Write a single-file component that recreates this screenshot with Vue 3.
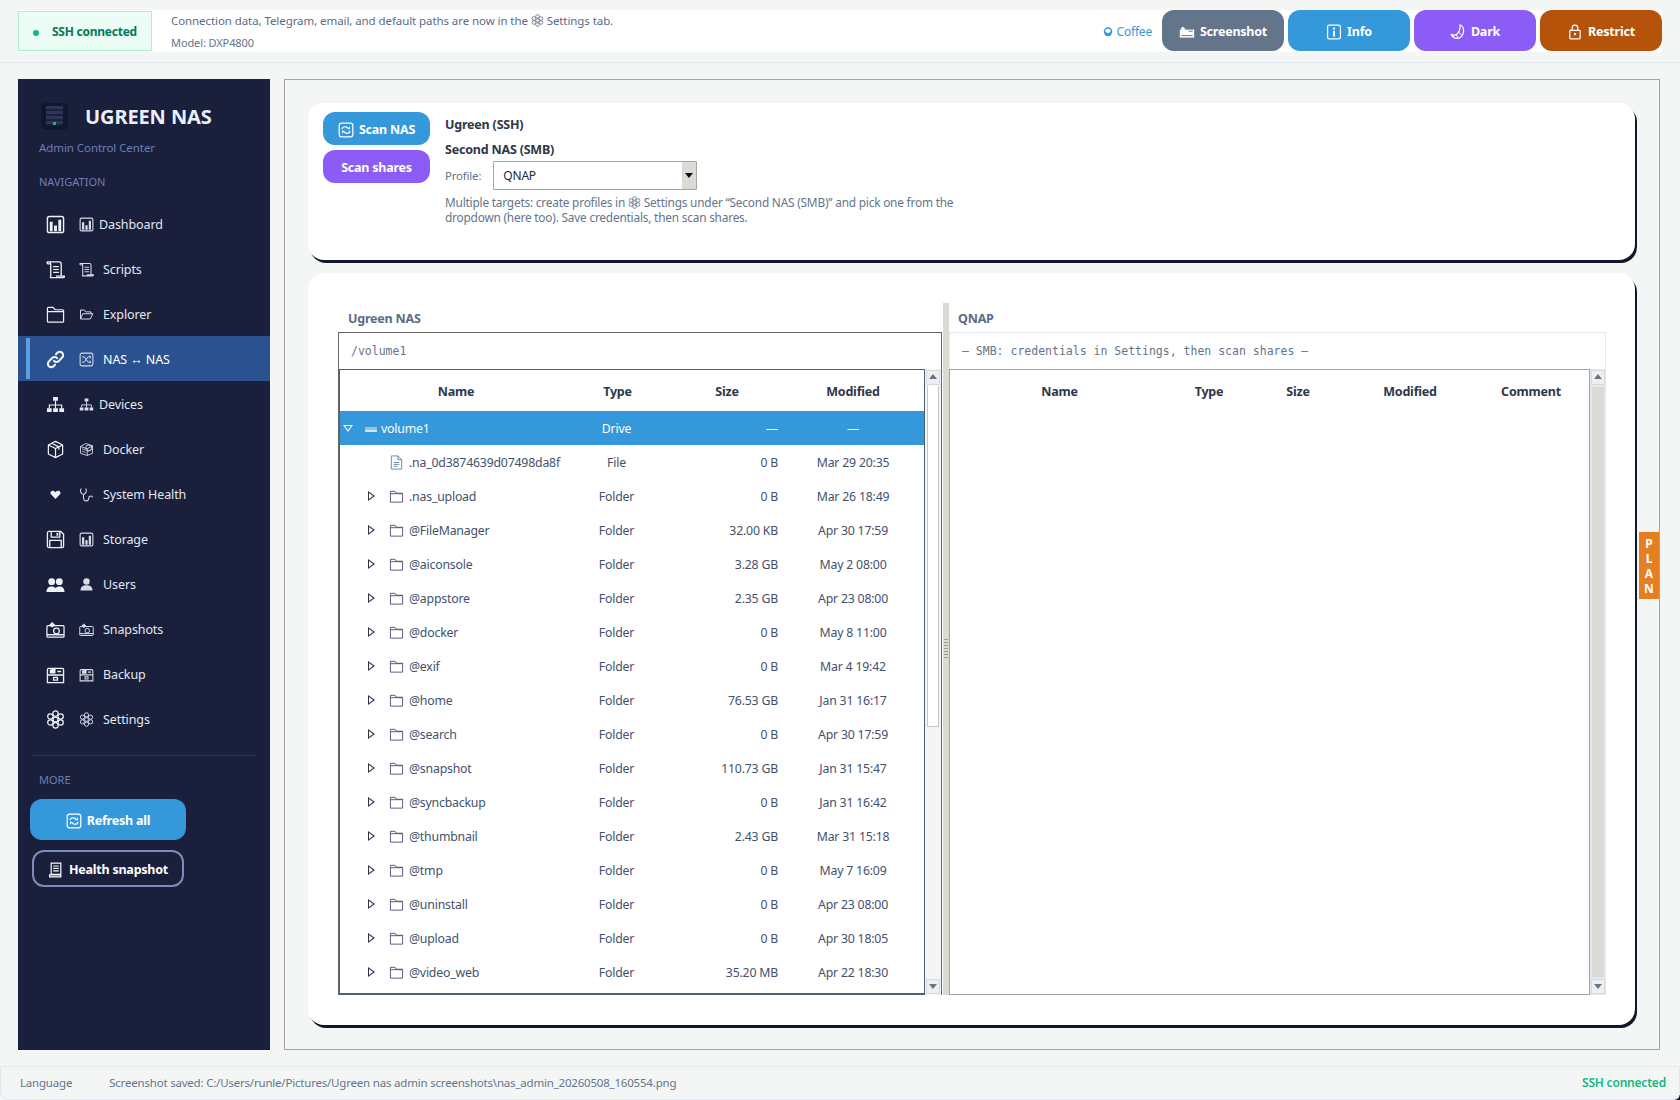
<script setup>
const navItems = [
  { label: 'Dashboard', big: 'chart', small: 'chart', textGap: 5 },
  { label: 'Scripts', big: 'scroll', small: 'scroll', textGap: 9 },
  { label: 'Explorer', big: 'folder', small: 'folderOpen', textGap: 9 },
  { label: 'NAS ↔ NAS', big: 'link', small: 'shuffle', textGap: 9, active: true },
  { label: 'Devices', big: 'network', small: 'network', textGap: 5 },
  { label: 'Docker', big: 'box', small: 'docker', textGap: 9 },
  { label: 'System Health', big: 'heart', small: 'stetho', textGap: 9 },
  { label: 'Storage', big: 'floppy', small: 'chart', textGap: 9 },
  { label: 'Users', big: 'users', small: 'user', textGap: 9 },
  { label: 'Snapshots', big: 'camera', small: 'camera', textGap: 9 },
  { label: 'Backup', big: 'backup', small: 'backup', textGap: 9 },
  { label: 'Settings', big: 'gear', small: 'gear', textGap: 9 }
]

const rows = [
  { name: '.na_0d3874639d07498da8f', type: 'File', size: '0 B', date: 'Mar 29 20:35' },
  { name: '.nas_upload', type: 'Folder', size: '0 B', date: 'Mar 26 18:49' },
  { name: '@FileManager', type: 'Folder', size: '32.00 KB', date: 'Apr 30 17:59' },
  { name: '@aiconsole', type: 'Folder', size: '3.28 GB', date: 'May 2 08:00' },
  { name: '@appstore', type: 'Folder', size: '2.35 GB', date: 'Apr 23 08:00' },
  { name: '@docker', type: 'Folder', size: '0 B', date: 'May 8 11:00' },
  { name: '@exif', type: 'Folder', size: '0 B', date: 'Mar 4 19:42' },
  { name: '@home', type: 'Folder', size: '76.53 GB', date: 'Jan 31 16:17' },
  { name: '@search', type: 'Folder', size: '0 B', date: 'Apr 30 17:59' },
  { name: '@snapshot', type: 'Folder', size: '110.73 GB', date: 'Jan 31 15:47' },
  { name: '@syncbackup', type: 'Folder', size: '0 B', date: 'Jan 31 16:42' },
  { name: '@thumbnail', type: 'Folder', size: '2.43 GB', date: 'Mar 31 15:18' },
  { name: '@tmp', type: 'Folder', size: '0 B', date: 'May 7 16:09' },
  { name: '@uninstall', type: 'Folder', size: '0 B', date: 'Apr 23 08:00' },
  { name: '@upload', type: 'Folder', size: '0 B', date: 'Apr 30 18:05' },
  { name: '@video_web', type: 'Folder', size: '35.20 MB', date: 'Apr 22 18:30' }
]

const rightCols = ['Name', 'Type', 'Size', 'Modified', 'Comment']
</script>

<template>
  <div class="app">
    <svg class="sprite" aria-hidden="true">
      <symbol id="chart" viewBox="0 0 20 20"><rect x="1.5" y="1.5" width="17" height="17" rx="2" fill="none" stroke="currentColor" stroke-width="1.5"/><path d="M4 7h3v10H4zM8.5 11h3v6h-3zM13 5h3v12h-3z" fill="currentColor"/></symbol>
      <symbol id="scroll" viewBox="0 0 20 20"><path d="M1 2h13c1 0 2 1 2 2v13M4 2c1 1 1 2 1 3v12c0 1-.5 1.500-1 1.500M4 18.500h14c1 0 1.500-.5 1.500-1.500h-9M1 2c0 1 .5 2 2 2h2" fill="none" stroke="currentColor" stroke-width="1.400"/><path d="M7.500 7h6M7.500 10h6M7.500 13h6" stroke="currentColor" stroke-width="1.300"/></symbol>
      <symbol id="folder" viewBox="0 0 20 20"><path d="M1.500 17V3.500c0-.6.400-1 1-1h5l2 2.500h8c.6 0 1 .4 1 1V17c0 .6-.4 1-1 1h-15c-.6 0-1-.4-1-1zM1.500 7h17" fill="none" stroke="currentColor" stroke-width="1.300"/></symbol>
      <symbol id="folderOpen" viewBox="0 0 20 20"><path d="M2 16V4h5l2 2.500h7V9M2 16l3-7h13.500L15 16z" fill="none" stroke="currentColor" stroke-width="1.300" stroke-linejoin="round"/></symbol>
      <symbol id="link" viewBox="0 0 20 20"><path d="M8.500 11.500a3.500 3.500 0 0 0 5 0l3.500-3.500a3.500 3.500 0 0 0-5-5L10.500 4.500M11.500 8.500a3.500 3.500 0 0 0-5 0L3 12a3.500 3.500 0 0 0 5 5l1.500-1.500" fill="none" stroke="currentColor" stroke-width="2.200" stroke-linecap="round"/></symbol>
      <symbol id="shuffle" viewBox="0 0 20 20"><rect x="1.500" y="1.500" width="17" height="17" rx="2.500" fill="none" stroke="currentColor" stroke-width="1.400"/><path d="M4 6.500h3l5 7h3.500M4 13.500h3l5-7h3.500M14 4.800l2 1.700-2 1.700M14 11.800l2 1.700-2 1.700" fill="none" stroke="currentColor" stroke-width="1.300"/></symbol>
      <symbol id="network" viewBox="0 0 20 20"><path d="M7.500 2h5v4h-5zM1 14h5v4H1zM7.500 14h5v4h-5zM14 14h5v4h-5z" fill="currentColor"/><path d="M10 6v8M3.500 14v-3.500h13V14" fill="none" stroke="currentColor" stroke-width="1.200"/></symbol>
      <symbol id="box" viewBox="0 0 20 20"><path d="M10 1.500l7.500 3.700v9.600L10 18.500l-7.500-3.700V5.200zM2.500 5.200L10 9l7.500-3.800M10 9v9.500M6 3.400l7.500 3.800v3" fill="none" stroke="currentColor" stroke-width="1.300" stroke-linejoin="round"/></symbol>
      <symbol id="docker" viewBox="0 0 20 20"><path d="M2 6l7-4 9 3v10l-7 3-9-3zM2 6l9 3 7-4M11 9v9" fill="none" stroke="currentColor" stroke-width="1.200"/><circle cx="13" cy="8" r="4" fill="none" stroke="currentColor" stroke-width="1.200"/><path d="M4 9l5 2M4 12l5 2M12 12l4-2" stroke="currentColor" stroke-width="1"/></symbol>
      <symbol id="heart" viewBox="-6 -6 32 32"><path d="M10 17.500L2.700 10C.5 7.600 1.700 3.500 5.500 3.500c2 0 3.600 1.200 4.500 2.800.9-1.600 2.500-2.800 4.500-2.800 3.800 0 5 4.100 2.800 6.500z" fill="currentColor"/></symbol>
      <symbol id="stetho" viewBox="0 0 20 20"><path d="M3 2C1 5 2 9 6 10c3-1 5-5 3-8M6 10v4c0 3 2 4.500 4 4.500s3-1.500 3-3.500 1.500-3 3-3 2 1 2 2" fill="none" stroke="currentColor" stroke-width="1.400"/></symbol>
      <symbol id="floppy" viewBox="0 0 20 20"><path d="M1.500 3c0-.8.700-1.500 1.500-1.500h12.500l3 3V17c0 .8-.7 1.500-1.500 1.500H3c-.8 0-1.500-.7-1.500-1.500zM5.500 1.500v6h9v-6M4 18.500V11h12v7.500" fill="none" stroke="currentColor" stroke-width="1.400"/><path d="M11 3h2v3h-2z" fill="currentColor"/></symbol>
      <symbol id="users" viewBox="0 0 20 20"><circle cx="6" cy="7" r="3.600" fill="currentColor"/><circle cx="14" cy="7" r="3.600" fill="currentColor"/><path d="M.5 18c0-4 2-6 5.500-6 1.800 0 3 .6 4 1.700 1-1.100 2.200-1.700 4-1.700 3.500 0 5.500 2 5.500 6z" fill="currentColor"/></symbol>
      <symbol id="user" viewBox="0 0 20 20"><circle cx="10" cy="6" r="4.300" fill="currentColor"/><path d="M2 18c0-5 3-7 8-7s8 2 8 7z" fill="currentColor"/></symbol>
      <symbol id="camera" viewBox="0 0 20 20"><rect x="1" y="6" width="18" height="12" rx="1" fill="none" stroke="currentColor" stroke-width="1.300"/><path d="M1 15.500h18" stroke="currentColor" stroke-width="1.500"/><circle cx="11" cy="11.500" r="3" fill="none" stroke="currentColor" stroke-width="1.300"/><path d="M6.500 2L10 5.500 6.500 8 3 5.500z" fill="currentColor"/></symbol>
      <symbol id="backup" viewBox="0 0 20 20"><path d="M1.500 18.500V5c0-.8.700-1.500 1.500-1.500h14c.8 0 1.500.7 1.500 1.500v13.500zM1.500 10.500h17M8 13h4v3H8z" fill="none" stroke="currentColor" stroke-width="1.400"/><path d="M4 5l6-2v6H4zM12 6h4v1.500h-4z" fill="currentColor"/></symbol>
      <symbol id="gear" viewBox="0 0 20 20"><g fill="none" stroke="currentColor" stroke-width="1.300"><circle cx="10" cy="3.800" r="2.800"/><circle cx="10" cy="16.200" r="2.800"/><circle cx="4.600" cy="6.900" r="2.800"/><circle cx="15.400" cy="6.900" r="2.800"/><circle cx="4.600" cy="13.100" r="2.800"/><circle cx="15.400" cy="13.100" r="2.800"/><circle cx="10" cy="10" r="2.600"/></g></symbol>
      <symbol id="refresh" viewBox="0 0 20 20"><rect x="1.500" y="1.500" width="17" height="17" rx="3" fill="none" stroke="currentColor" stroke-width="1.500"/><path d="M5 9c.5-2 2.500-3.300 4.500-3 1.300.2 2.300.9 3 2M15 11c-.5 2-2.500 3.300-4.500 3-1.300-.2-2.300-.9-3-2" fill="none" stroke="currentColor" stroke-width="1.500"/><path d="M11.500 9h3.500V5.500zM8.500 11H5v3.500z" fill="currentColor"/></symbol>
      <symbol id="info" viewBox="0 0 20 20"><rect x="2" y="1.500" width="16" height="17" rx="2" fill="none" stroke="currentColor" stroke-width="1.500"/><path d="M8.800 4.500h2.400v2.400H8.800zM8.800 8.500h2.400V15.500H8.800z" fill="currentColor"/></symbol>
      <symbol id="moon" viewBox="0 0 20 20"><path d="M12.500 1c2.500 1 4.500 4 4.500 7.500 0 5-3.500 9.500-8 9.500-3.500 0-6.500-1.500-7.500-5 2.500 1.300 5.500 1 7.500-.5 2-2 4-6.500 3.500-11.500z" fill="none" stroke="currentColor" stroke-width="1.500" stroke-linejoin="round"/><path d="M4 13.500l1 4M8 13l1.500 4.500M11 10.500l3.500 3" stroke="currentColor" stroke-width="1.200"/></symbol>
      <symbol id="lock" viewBox="0 0 20 20"><rect x="3.500" y="8" width="13" height="10.500" rx="1" fill="none" stroke="currentColor" stroke-width="1.500"/><path d="M6.500 8V5a3.500 3.500 0 0 1 7 0v3" fill="none" stroke="currentColor" stroke-width="1.500"/><circle cx="10" cy="12.500" r="1.500" fill="currentColor"/></symbol>
      <symbol id="shot" viewBox="0 0 20 20"><path d="M1 7h18v10H1z" fill="currentColor"/><path d="M5 3l3 3-3 3-3-3z" fill="currentColor"/><path d="M12 9h5M3 14.500h14" stroke="#64748b" stroke-width="1.200"/></symbol>
      <symbol id="coffee" viewBox="0 0 20 20"><path d="M10 2a7 7 0 0 1 7 7c0 3-2 6-3.500 7.500h-7C5 15 3 12 3 9a7 7 0 0 1 7-7z" fill="currentColor"/><ellipse cx="10" cy="8" rx="4.500" ry="3.500" fill="#fff"/></symbol>
      <symbol id="report" viewBox="0 0 20 20"><path d="M4 1.500h12v14H4zM2 18.500h14V16H2z" fill="none" stroke="currentColor" stroke-width="1.500"/><path d="M6.500 5h7M6.500 8h7M6.500 11h7" stroke="currentColor" stroke-width="1.500"/></symbol>
      <symbol id="treeFolder" viewBox="0 0 16 16"><path d="M1.500 14V2.500h5l1 2h7V14zM1.500 5h13" fill="none" stroke="currentColor" stroke-width="1"/></symbol>
      <symbol id="treeFile" viewBox="0 0 16 16"><path d="M2.500 1h7l4 4v10h-11zM9.500 1v4h4" fill="none" stroke="#6f86a8" stroke-width="1"/><path d="M5 8h6M5 10h6M5 12h4" stroke="#6f86a8" stroke-width="1"/></symbol>
    </svg>

    <header class="topbar">
      <div class="topstrip">
        <div class="ssh-badge"><span class="dot"></span><b>SSH connected</b></div>
        <div class="notes">
          <div>Connection data, Telegram, email, and default paths are now in the <svg class="inline-ic"><use href="#gear"/></svg> Settings tab.</div>
          <div class="model">Model: DXP4800</div>
        </div>
        <div class="coffee"><svg class="inline-ic"><use href="#coffee"/></svg> Coffee</div>
        <div class="top-actions">
          <button class="btn slate"><svg class="btn-ic"><use href="#shot"/></svg>Screenshot</button>
          <button class="btn blue"><svg class="btn-ic"><use href="#info"/></svg>Info</button>
          <button class="btn violet"><svg class="btn-ic"><use href="#moon"/></svg>Dark</button>
          <button class="btn rust"><svg class="btn-ic"><use href="#lock"/></svg>Restrict</button>
        </div>
      </div>
    </header>

    <div class="body">
      <aside class="sidebar">
        <div class="brand">
          <div class="logo"><span class="logo-lines"></span><span class="logo-dot"></span></div>
          <div class="brand-name">UGREEN NAS</div>
        </div>
        <div class="brand-sub">Admin Control Center</div>
        <div class="section">NAVIGATION</div>
        <nav class="nav">
          <div v-for="item in navItems" :key="item.label" class="nav-item" :class="{ active: item.active }">
            <svg class="nav-big"><use :href="'#' + item.big"/></svg>
            <svg class="nav-small"><use :href="'#' + item.small"/></svg>
            <span :style="{ marginLeft: item.textGap + 'px' }">{{ item.label }}</span>
          </div>
        </nav>
        <div class="divider"></div>
        <div class="section more">MORE</div>
        <button class="btn blue refresh"><svg class="btn-ic"><use href="#refresh"/></svg>Refresh all</button>
        <button class="btn outline"><svg class="btn-ic"><use href="#report"/></svg>Health snapshot</button>
      </aside>

      <main class="panel">
        <section class="card top-card">
          <div class="scan-btns">
            <button class="btn blue scan"><svg class="btn-ic"><use href="#refresh"/></svg>Scan NAS</button>
            <button class="btn violet scan">Scan shares</button>
          </div>
          <div class="scan-info">
            <div class="strong first">Ugreen (SSH)</div>
            <div class="strong second">Second NAS (SMB)</div>
            <div class="profile">
              <span>Profile:</span>
              <div class="select"><span class="select-val">QNAP</span><span class="select-arrow"></span></div>
            </div>
            <p class="help">Multiple targets: create profiles in <svg class="inline-ic"><use href="#gear"/></svg> Settings under “Second NAS (SMB)” and pick one from the<br>dropdown (here too). Save credentials, then scan shares.</p>
          </div>
        </section>

        <section class="card tree-card">
          <div class="pane left-pane">
            <div class="pane-title">Ugreen NAS</div>
            <div class="path-box dark">/volume1</div>
            <div class="tree-wrap">
              <div class="tree left-tree">
                <div class="t-row t-head">
                  <div class="c-name center">Name</div><div class="c-type">Type</div><div class="c-size center">Size</div><div class="c-date">Modified</div>
                </div>
                <div class="t-row t-item selected">
                  <div class="c-name root"><span class="tri-down"></span><span class="drive"></span>volume1</div>
                  <div class="c-type">Drive</div><div class="c-size">—</div><div class="c-date">—</div>
                </div>
                <div v-for="r in rows" :key="r.name" class="t-row t-item">
                  <div class="c-name">
                    <span v-if="r.type === 'Folder'" class="tri-right"></span>
                    <span v-else class="tri-none"></span>
                    <svg class="tree-ic"><use :href="r.type === 'Folder' ? '#treeFolder' : '#treeFile'"/></svg>
                    {{ r.name }}
                  </div>
                  <div class="c-type">{{ r.type }}</div>
                  <div class="c-size">{{ r.size }}</div>
                  <div class="c-date">{{ r.date }}</div>
                </div>
              </div>
              <div class="scrollbar light">
                <span class="sb-btn up"></span>
                <span class="sb-thumb"></span>
                <span class="sb-rest"></span>
                <span class="sb-btn down"></span>
              </div>
            </div>
          </div>

          <div class="sash"><span class="grip"></span></div>

          <div class="pane right-pane">
            <div class="pane-title">QNAP</div>
            <div class="path-box">— SMB: credentials in Settings, then scan shares —</div>
            <div class="tree-wrap">
              <div class="tree right-tree">
                <div class="r-head">
                  <div v-for="c in rightCols" :key="c">{{ c }}</div>
                </div>
              </div>
              <div class="scrollbar grey">
                <span class="sb-btn up"></span>
                <span class="sb-rest"></span>
                <span class="sb-btn down"></span>
              </div>
            </div>
          </div>
        </section>

        <div class="plan-tab"><span>P</span><span>L</span><span>A</span><span>N</span></div>
      </main>
    </div>

    <footer class="statusbar">
      <span class="lang">Language</span>
      <span class="saved">Screenshot saved: C:/Users/runle/Pictures/Ugreen nas admin screenshots\nas_admin_20260508_160554.png</span>
      <span class="conn">SSH connected</span>
    </footer>
  </div>
</template>

<style>
html, body { margin: 0; background: #f4f6f6; }
</style>

<style scoped>
.app {
  width: 1680px;
  height: 1100px;
  display: flex;
  flex-direction: column;
  overflow: hidden;
  background: #f4f6f6;
  color: #2d3748;
  font-family: "Noto Sans", "Open Sans", sans-serif;
  font-size: 12px;
}
.sprite { position: absolute; width: 0; height: 0; }
button { font-family: inherit; border: 0; padding: 0; }

.topbar {
  height: 62px;
  box-sizing: content-box;
  border-bottom: 1px solid #e2e8f0;
  padding: 0 18px;
  display: flex;
  align-items: center;
  flex-shrink: 0;
}
.topstrip {
  flex: 1;
  height: 42px;
  background: #fff;
  display: flex;
  align-items: center;
}
.ssh-badge {
  width: 134px;
  height: 40px;
  box-sizing: border-box;
  background: #ecfdf5;
  border: 1px solid #a7f3d0;
  display: flex;
  align-items: center;
  padding-left: 14px;
  color: #047857;
  font-size: 12px;
}
.ssh-badge b { font-weight: 700; letter-spacing: -0.25px; }
.dot { width: 6px; height: 6px; border-radius: 50%; background: #10b981; margin-right: 13px; margin-top: 3px; }
.notes {
  margin-left: 19px;
  color: #5b6b85;
  font-size: 11.5px;
  letter-spacing: -0.08px;
  display: flex;
  flex-direction: column;
  gap: 7px;
}
.model { color: #64748b; font-size: 11px; letter-spacing: -0.1px; }
.inline-ic { width: 13px; height: 13px; vertical-align: -2px; color: #64748b; }
.coffee { margin-left: auto; margin-right: 10px; color: #3498db; font-size: 12px; letter-spacing: -0.2px; }
.coffee .inline-ic { color: #3498db; width: 12px; height: 12px; }
.top-actions { display: flex; gap: 4px; align-self: flex-start; }

.btn {
  display: flex;
  align-items: center;
  justify-content: center;
  gap: 5px;
  color: #fff;
  font-weight: 700;
  font-size: 12.5px;
  letter-spacing: -0.22px;
  border-radius: 12px;
  padding-top: 2px;
}
.top-actions .btn { width: 122px; height: 41px; }
.btn-ic { width: 16px; height: 16px; }
.slate { background: #64748b; }
.blue { background: #3498db; }
.violet { background: #8b5cf6; }
.rust { background: #b45309; }

.body {
  flex: 1;
  display: flex;
  gap: 14px;
  padding: 16px 20px 16px 18px;
  min-height: 0;
}
.sidebar {
  width: 252px;
  background: #1a1f3c;
  display: flex;
  flex-direction: column;
  color: #e2e8f0;
  flex-shrink: 0;
}
.brand { display: flex; align-items: center; padding: 24px 0 0 23px; }
.logo {
  position: relative;
  width: 27px;
  height: 27px;
  background: #10162c;
  border-radius: 5px;
}
.logo-lines {
  position: absolute;
  left: 5px;
  top: 3px;
  width: 17px;
  height: 20px;
  background: repeating-linear-gradient(#2c3554 0 3px, #1a2140 3px 5px);
}
.logo-dot { position: absolute; left: 12px; top: 19px; width: 3px; height: 3px; background: #10b981; }
.brand-name { margin-left: 17px; font-size: 20px; font-weight: 700; color: #e8f0fa; letter-spacing: -0.1px; }
.brand-sub { margin: 10px 0 0 21px; font-size: 11.5px; color: #6b7fb8; letter-spacing: -0.07px; line-height: 16px; }
.section { margin: 18px 0 0 21px; font-size: 11px; color: #6b7fb8; line-height: 15px; }
.nav { margin-top: 12px; display: flex; flex-direction: column; }
.nav-item {
  position: relative;
  height: 45px;
  box-sizing: border-box;
  display: flex;
  align-items: center;
  padding: 2px 0 0 28px;
  font-size: 12.5px;
  color: #e2e8f0;
  letter-spacing: -0.1px;
}
.nav-item.active { background: #2c5190; color: #fff; }
.nav-item.active::before {
  content: "";
  position: absolute;
  left: 8px;
  top: 2px;
  bottom: 2px;
  width: 4px;
  background: #5b9fe3;
}
.nav-big { width: 19px; height: 19px; color: #eef2f8; }
.nav-small { width: 15px; height: 15px; margin-left: 14px; color: #d5dcea; }
.divider { height: 1px; background: #2f3658; margin: 14px 14px 0; }
.section.more { margin-top: 16px; }
.refresh { width: 156px; height: 41px; margin: 12px 0 0 12px; }
.outline {
  width: 152px;
  height: 37px;
  box-sizing: border-box;
  margin: 10px 0 0 14px;
  background: transparent;
  border: 2px solid #7e8bb8;
}

.panel {
  position: relative;
  flex: 1;
  box-sizing: border-box;
  border: 1px solid #a8a49c;
  padding: 23px 24px 0 23px;
  display: flex;
  flex-direction: column;
  gap: 13px;
}
.card {
  background: #fff;
  border-radius: 16px;
  box-shadow: 2px 3px 0 #0f172a;
}
.top-card { height: 157px; display: flex; padding: 9px 0 0 15px; box-sizing: border-box; }
.scan-btns { width: 107px; display: flex; flex-direction: column; gap: 5px; }
.scan { height: 33px; width: 107px; }
.scan-info { margin-left: 15px; }
.strong { font-weight: 700; font-size: 12.5px; color: #2d3748; letter-spacing: -0.2px; line-height: 17px; }
.strong.first { margin-top: 4px; }
.strong.second { margin-top: 8px; }
.profile { display: flex; align-items: center; margin-top: 3px; color: #64748b; font-size: 11.5px; letter-spacing: -0.2px; }
.select {
  width: 204px;
  height: 29px;
  box-sizing: border-box;
  margin-left: 12px;
  border: 1px solid #a8a49c;
  background: #fff;
  display: flex;
  align-items: center;
  border-radius: 1px;
}
.select-val { flex: 1; padding-left: 9px; color: #1f2937; font-size: 12px; }
.select-arrow {
  width: 14px;
  height: 100%;
  background: #dcdad5;
  position: relative;
}
.select-arrow::after {
  content: "";
  position: absolute;
  left: 3px;
  top: 11px;
  border-left: 4px solid transparent;
  border-right: 4px solid transparent;
  border-top: 5px solid #111;
}
.help { margin: 5px 0 0; color: #64748b; font-size: 11.85px; letter-spacing: -0.2px; line-height: 15px; }

.tree-card { height: 752px; display: flex; padding: 30px 26px 0 30px; box-sizing: border-box; }
.pane { display: flex; flex-direction: column; }
.left-pane { width: 604px; }
.right-pane { width: 657px; }
.pane-title { height: 29px; padding-left: 10px; color: #5b6b85; font-weight: 700; font-size: 12.5px; letter-spacing: -0.2px; line-height: 32px; }
.right-pane .pane-title { padding-left: 9px; }
.path-box {
  height: 37px;
  box-sizing: border-box;
  border: 1px solid #e2e8f0;
  border-bottom: 0;
  padding-left: 12px;
  line-height: 37px;
  font-family: "DejaVu Sans Mono", "Liberation Mono", monospace;
  font-size: 11.5px;
  color: #64748b;
}
.path-box.dark { border-color: #666; }
.tree-wrap { flex: none; height: 626px; display: flex; }
.left-pane .tree-wrap { border-left: 1px solid #666; border-right: 1px solid #666; }
.tree { box-sizing: border-box; background: #fff; }
.left-tree {
  width: 586px;
  border: 1px solid #4a6178;
  border-bottom-width: 2px;
}
.right-tree {
  width: 641px;
  border: 1px solid #a8a49c;
}
.t-row { display: grid; grid-template-columns: 232px 86px 120px 146px; align-items: center; }
.t-head { height: 41px; box-sizing: border-box; padding-top: 2px; font-weight: 700; font-size: 12.5px; letter-spacing: -0.2px; color: #2d3748; }
.t-item { height: 34px; color: #43516b; font-size: 12.3px; letter-spacing: -0.2px; }
.t-item.selected { background: #3498db; color: #fff; }
.center { text-align: center; }
.c-name { display: flex; align-items: center; white-space: nowrap; }
.c-name.center { justify-content: center; }
.c-type { text-align: center; padding-left: 3px; }
.t-head .c-type { padding-left: 5px; }
.c-size { text-align: right; }
.t-head .c-size { text-align: center; padding-left: 18px; }
.c-date { text-align: center; padding-left: 4px; }
.root { padding-left: 3px; }
.tri-down {
  position: relative;
  width: 0;
  height: 0;
  border-left: 5.500px solid transparent;
  border-right: 5.500px solid transparent;
  border-top: 7px solid #fff;
  margin-right: 12px;
}
.tri-down::after {
  content: "";
  position: absolute;
  left: -3.500px;
  top: -6px;
  border-left: 3.500px solid transparent;
  border-right: 3.500px solid transparent;
  border-top: 4.500px solid #3498db;
}
.drive {
  width: 12px;
  height: 5px;
  background: linear-gradient(#8fc3ea 0 3px, #cfe6f6 3px);
  margin: 2px 4px 0 0;
}
.tri-right {
  position: relative;
  width: 0;
  height: 0;
  margin-left: 28px;
  margin-right: 14px;
  border-top: 5.500px solid transparent;
  border-bottom: 5.500px solid transparent;
  border-left: 7px solid #2d3748;
}
.tri-right::after {
  content: "";
  position: absolute;
  left: -6px;
  top: -3.500px;
  border-top: 3.500px solid transparent;
  border-bottom: 3.500px solid transparent;
  border-left: 4.500px solid #fff;
}
.tri-none { width: 49px; }
.tree-ic { width: 15px; height: 15px; margin-right: 5px; color: #5b4f7a; }

.r-head {
  height: 41px;
  box-sizing: border-box;
  padding-top: 2px;
  display: grid;
  grid-template-columns: 219px 80px 98px 126px 116px;
  align-items: center;
  text-align: center;
  font-weight: 700;
  font-size: 12.5px;
  letter-spacing: -0.2px;
}

.scrollbar { width: 16px; display: flex; flex-direction: column; }
.light { background: #f4f6f6; }
.grey { background: #e2e8f0; }
.sb-btn {
  position: relative;
  height: 13px;
  margin: 1px;
  background: #eef0f0;
  border: 1px solid #dcdad5;
  flex-shrink: 0;
}
.sb-btn::after {
  content: "";
  position: absolute;
  left: 2px;
  border-left: 4px solid transparent;
  border-right: 4px solid transparent;
}
.sb-btn.up::after { top: 3px; border-bottom: 5px solid #64748b; }
.sb-btn.down::after { top: 4px; border-top: 5px solid #64748b; }
.sb-thumb {
  height: 340px;
  margin: 0 2px;
  background: #fff;
  border: 1px solid #c6c6c6;
  border-top: 0;
  flex-shrink: 0;
}
.sb-rest { flex: 1; }
.grey .sb-rest { background: #dcdad5; margin: 1px 2px; }

.sash {
  width: 6px;
  margin: 0 0 0 1px;
  height: 692px;
  background: #dcdad5;
  position: relative;
}
.grip {
  position: absolute;
  left: 1px;
  top: 336px;
  width: 4px;
  height: 19px;
  background: repeating-linear-gradient(#9d9a92 0 1px, #dcdad5 1px 3px);
}

.plan-tab {
  position: absolute;
  right: 0;
  top: 452px;
  width: 20px;
  height: 67px;
  background: #e67e22;
  color: #fff;
  font-weight: 700;
  font-size: 12px;
  display: flex;
  flex-direction: column;
  align-items: center;
  justify-content: center;
  line-height: 15px;
}
.statusbar {
  position: relative;
  height: 34px;
  flex-shrink: 0;
  border: 1px solid #e2e8f0;
  border-radius: 0 0 8px 8px;
  box-sizing: border-box;
  display: flex;
  align-items: center;
  padding: 0 13px 1px 19px;
  font-size: 11.5px;
  letter-spacing: -0.2px;
  color: #64748b;
}
.statusbar::after {
  content: "";
  position: absolute;
  right: -1px;
  bottom: -1px;
  width: 5px;
  height: 5px;
  background: radial-gradient(circle at 0 0, transparent 4px, #0f172a 5px);
}
.saved { margin-left: 37px; }
.conn { margin-left: auto; color: #10b981; font-weight: 600; font-size: 12px; }
</style>
